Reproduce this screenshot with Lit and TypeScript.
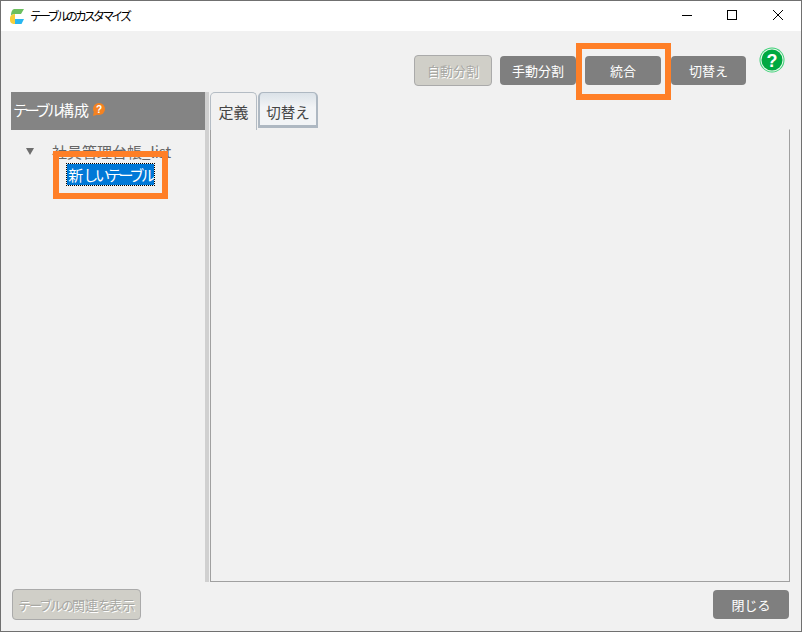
import { LitElement, html, css } from "lit";
import { customElement } from "lit/decorators.js";

@customElement("app-root")
export class AppRoot extends LitElement {
  static styles = css`
    :host {
      display: block;
      width: 802px;
      height: 632px;
      font-family: "Noto Sans CJK JP", "Noto Sans", sans-serif;
      color: #333;
    }
    * { box-sizing: border-box; }
    .k { letter-spacing: -0.22em; }
    .win {
      position: relative;
      width: 802px;
      height: 632px;
      border: 1px solid #707070;
      background: #f1f1f1;
      display: flex;
      flex-direction: column;
      overflow: hidden;
    }
    .titlebar {
      height: 30px;
      flex: none;
      background: #fff;
      display: flex;
      align-items: center;
      padding: 0 1px 0 9px;
      font-size: 12px;
      color: #000;
    }
    .logo { width: 14px; height: 15px; margin-right: 6px; flex: none; }
    .title { flex: 1; white-space: nowrap; padding-bottom: 1px; }
    .title .k { letter-spacing: -0.24em; }
    .wbtn { width: 45px; height: 30px; display: flex; align-items: center; padding-left: 16px; }
    .wbtn.x { padding-left: 17px; }
    .wbtn svg { width: 12px; height: 12px; margin-bottom: 2px; }
    .toolbar {
      height: 61px;
      flex: none;
      display: flex;
      align-items: flex-start;
      padding: 25px 0 0 413px;
    }
    .btn {
      height: 29px;
      border-radius: 4px;
      background: #7f7f7f;
      color: #fff;
      font-size: 13px;
      display: flex;
      align-items: center;
      justify-content: center;
      flex: none;
      white-space: nowrap;
      padding-bottom: 1px;
    }
    .btn.off {
      background: #d0cfc8;
      border: 1px solid #aaa;
      color: #a8a8a4;
      text-shadow: 1px 1px 0 #fff;
    }
    .toolbar .off { width: 78px; height: 31px; margin-right: 8px; margin-top: -1px; }
    .toolbar .b1 { width: 76px; margin-right: 9px; }
    .toolbar .b2 { width: 76px; margin-right: 10px; }
    .toolbar .b3 { width: 75px; margin-right: 13px; }
    .help { width: 26px; height: 26px; margin-top: -9px; flex: none; }
    .main {
      flex: 1;
      min-height: 0;
      display: flex;
      padding-left: 10px;
      padding-right: 11px;
    }
    .left { width: 194px; flex: none; }
    .lhead {
      height: 38px;
      background: #848484;
      color: #fff;
      font-size: 15px;
      display: flex;
      align-items: center;
      padding: 0 0 3px 2px;
      gap: 4px;
      white-space: nowrap;
    }
    .qmark { width: 14px; height: 15px; margin-left: -1px; }
    .tree { font-size: 15px; color: #666; }
    .node { display: flex; align-items: center; height: 20px; margin-top: 11px; padding-left: 15px; white-space: nowrap; }
    .arrow { width: 0; height: 0; border-left: 4px solid transparent; border-right: 4px solid transparent; border-top: 7px solid #6e6e6e; margin-right: 18px; }
    .child { margin: 3px 0 0 56px; width: 87px; height: 21px; background: #0078d7; color: #fff; outline: 1px dotted #000; display: flex; align-items: center; justify-content: center; white-space: nowrap; }
    .split { width: 4px; flex: none; background: #d0d0d0; margin-right: 1px; }
    .right { flex: 1; min-width: 0; display: flex; flex-direction: column; }
    .tabs { display: flex; height: 38px; flex: none; align-items: flex-start; position: relative; z-index: 1; }
    .tab { font-size: 15px; color: #444; display: flex; align-items: center; justify-content: center; }
    .tab.on { width: 47px; height: 38px; background: #f1f1f1; border: 1px solid #b4bcc4; border-bottom: none; border-radius: 5px 5px 0 0; }
    .tab.offt { width: 60px; height: 36px; margin-left: 1px; padding-top: 4px; background: linear-gradient(#dbe2e8, #f2f4f6 45%); border: 2px solid #aeb8c2; border-top-width: 1px; border-bottom-width: 3px; border-radius: 5px 5px 0 0; font-size: 14.5px; }
    .panel { flex: 1; border: 1px solid #a0a0a0; border-top-color: #f1f1f1; margin-top: -1px; }
    .footer {
      height: 49px;
      flex: none;
      display: flex;
      justify-content: space-between;
      align-items: flex-start;
      padding: 7px 12px 0 11px;
    }
    .footer .off { width: 129px; height: 31px; font-size: 13px; }
    .footer .off .k { letter-spacing: -0.16em; }
    .footer .close { width: 76px; height: 29px; margin-top: 1px; }
    .mark { position: absolute; border: 6px solid #ff7f27; }
    .m1 { left: 52px; top: 150px; width: 115px; height: 48px; }
    .m2 { left: 575px; top: 42px; width: 95px; height: 57px; }
  `;

  render() {
    return html`
      <div class="win">
        <div class="titlebar">
          <svg class="logo" viewBox="0 0 14 15">
            <path d="M4 0H14L11 5H5Q2.500 5 1 6.500Q1 1 4 0Z" fill="#6cbf5f"/>
            <path d="M1 6.500Q2.500 5 5 5V15H3.500Q0 14.500 0 11V9Q0 7.500 1 6.500Z" fill="#f7cf3a"/>
            <path d="M5 10H14L11.500 15H5Z" fill="#29b6f0"/>
          </svg>
          <div class="title"><span class="k">テーブルのカスタマイズ</span></div>
          <div class="wbtn"><svg viewBox="0 0 12 12"><path d="M1 6.500H11" stroke="#000" fill="none"/></svg></div>
          <div class="wbtn"><svg viewBox="0 0 12 12"><rect x="1.500" y="1.500" width="9" height="9" stroke="#000" fill="none"/></svg></div>
          <div class="wbtn x"><svg viewBox="0 0 12 12"><path d="M1 1L11 11M11 1L1 11" stroke="#000" fill="none"/></svg></div>
        </div>
        <div class="toolbar">
          <div class="btn off">自動分割</div>
          <div class="btn b1">手動分割</div>
          <div class="btn b2">統合</div>
          <div class="btn b3">切替え</div>
          <svg class="help" viewBox="0 0 26 26">
            <circle cx="13" cy="13" r="12.500" fill="#3ccf75"/>
            <circle cx="13" cy="13" r="11.500" fill="#e4f8ea"/>
            <circle cx="13" cy="13" r="10.500" fill="#00a941"/>
            <text x="13" y="19.500" text-anchor="middle" font-size="18" font-weight="700" fill="#fff" font-family="Liberation Sans">?</text>
          </svg>
        </div>
        <div class="main">
          <div class="left">
            <div class="lhead"><span><span class="k">テーブル</span>構成</span>
              <svg class="qmark" viewBox="0 0 14 15">
                <circle cx="7" cy="7" r="6" fill="#f58220"/>
                <path d="M2 9L1 14L6 12.500Z" fill="#f58220"/>
                <text x="7" y="11" text-anchor="middle" font-size="10" font-weight="700" fill="#fff" font-family="Liberation Sans">?</text>
              </svg>
            </div>
            <div class="tree">
              <div class="node"><span class="arrow"></span>社員管理台帳_list</div>
              <div class="child"><span>新<span class="k">しいテーブル</span></span></div>
            </div>
          </div>
          <div class="split"></div>
          <div class="right">
            <div class="tabs">
              <div class="tab on">定義</div>
              <div class="tab offt">切替え</div>
            </div>
            <div class="panel"></div>
          </div>
        </div>
        <div class="footer">
          <div class="btn off"><span><span class="k">テーブルの</span>関連<span class="k">を</span>表示</span></div>
          <div class="btn close">閉じる</div>
        </div>
        <div class="mark m1"></div>
        <div class="mark m2"></div>
      </div>
    `;
  }
}
